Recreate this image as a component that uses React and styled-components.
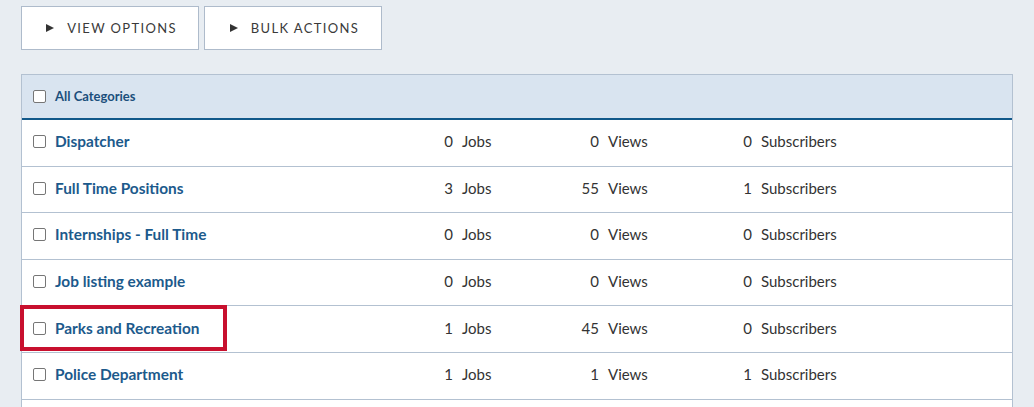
import React from "react";
import styled, { createGlobalStyle } from "styled-components";

const GlobalStyle = createGlobalStyle`
  body {
    margin: 0;
    background: #e8edf2;
    font-family: "Lato", "Open Sans", sans-serif;
  }
`;

const categories = [
  { name: "Dispatcher", jobs: 0, views: 0, subs: 0 },
  { name: "Full Time Positions", jobs: 3, views: 55, subs: 1 },
  { name: "Internships - Full Time", jobs: 0, views: 0, subs: 0 },
  { name: "Job listing example", jobs: 0, views: 0, subs: 0 },
  { name: "Parks and Recreation", jobs: 1, views: 45, subs: 0, highlight: true },
  { name: "Police Department", jobs: 1, views: 1, subs: 1 },
];

const Page = styled.div`
  padding: 6px 21px 0;
`;

const Toolbar = styled.div`
  display: flex;
  gap: 5px;
  margin-bottom: 24px;
`;

const ToolButton = styled.button`
  width: 178px;
  height: 44px;
  background: #fff;
  border: 1px solid #aebbcb;
  display: flex;
  align-items: center;
  justify-content: center;
  gap: 13px;
  font-family: inherit;
  font-size: 13px;
  letter-spacing: 1.35px;
  color: #3a3a3a;
  text-transform: uppercase;
  padding: 0 0 1px 3px;
  cursor: pointer;
`;

const Arrow = styled.span`
  width: 0;
  height: 0;
  border-top: 4.5px solid transparent;
  border-bottom: 4.5px solid transparent;
  border-left: 8px solid #333;
`;

const Table = styled.div`
  border: 1px solid #b3c1d1;
  border-bottom: none;
  background: #fff;
  padding-bottom: 20px;
`;

const HeaderRow = styled.div`
  height: 45px;
  box-sizing: border-box;
  background: #d9e4f0;
  border-bottom: 2px solid #11588a;
  display: flex;
  align-items: center;
  padding: 0 0 1px 11px;
  gap: 9px;
  font-size: 13px;
  font-weight: 700;
  color: #1b4f7c;
`;

const Row = styled.div`
  position: relative;
  height: 46.6px;
  box-sizing: border-box;
  border-bottom: 1px solid #b3c1d1;
  display: grid;
  grid-template-columns: 390px 146px 153px 1fr;
  align-items: center;
  padding: 0 0 3px 11px;
  font-size: 15px;
  color: #333;
`;

const Highlight = styled.span`
  position: absolute;
  left: -2px;
  top: -1px;
  width: 207px;
  height: 46px;
  box-sizing: border-box;
  border: 4px solid #c8102e;
  pointer-events: none;
`;

const NameCell = styled.label`
  display: flex;
  align-items: center;
  gap: 9px;
  font-size: 15.4px;
  font-weight: 700;
  color: #1c5a8c;
`;

const Check = styled.input.attrs({ type: "checkbox" })`
  appearance: none;
  margin: 1px 0 0;
  width: 13px;
  height: 13px;
  border: 1px solid #767676;
  border-radius: 2px;
  background: #fff;
  flex-shrink: 0;
`;

const Stat = styled.div`
  display: flex;
  align-items: center;
  gap: 9px;
`;

const StatNum = styled.span`
  width: 30px;
  text-align: right;
`;

export default function App() {
  return (
    <>
      <GlobalStyle />
      <Page>
        <Toolbar>
          <ToolButton>
            <Arrow />
            View Options
          </ToolButton>
          <ToolButton>
            <Arrow />
            Bulk Actions
          </ToolButton>
        </Toolbar>
        <Table>
          <HeaderRow>
            <Check />
            All Categories
          </HeaderRow>
          {categories.map((c) => (
            <Row key={c.name}>
              {c.highlight && <Highlight />}
              <NameCell>
                <Check />
                {c.name}
              </NameCell>
              <Stat>
                <StatNum>{c.jobs}</StatNum>Jobs
              </Stat>
              <Stat>
                <StatNum>{c.views}</StatNum>Views
              </Stat>
              <Stat>
                <StatNum>{c.subs}</StatNum>Subscribers
              </Stat>
            </Row>
          ))}
        </Table>
      </Page>
    </>
  );
}
